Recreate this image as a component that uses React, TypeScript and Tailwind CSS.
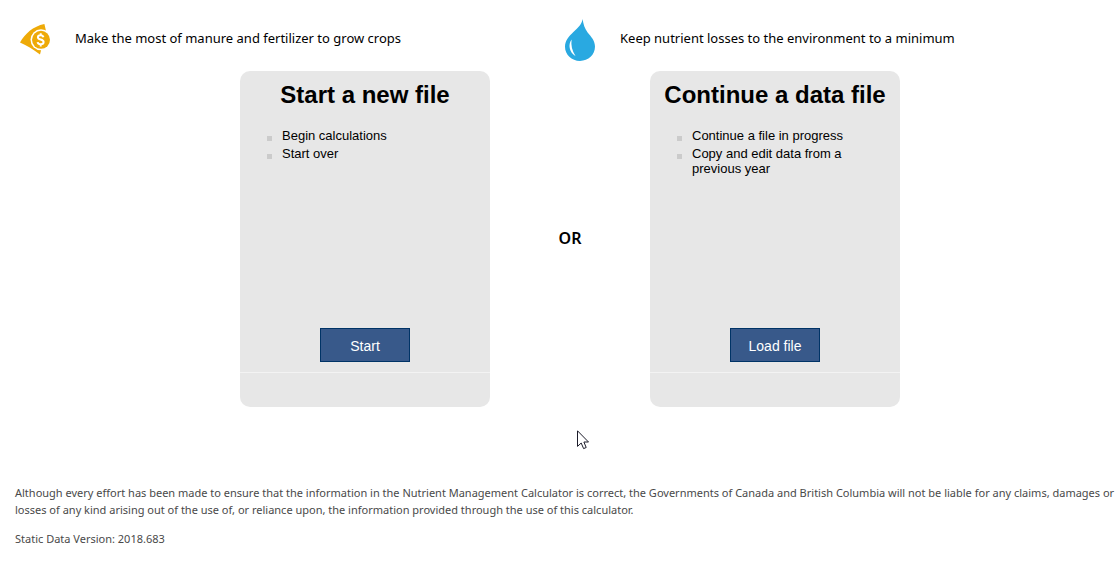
import type { ReactNode } from "react";

function CoinIcon() {
  return (
    <svg width="30" height="32" viewBox="0 0 30 32" aria-hidden="true">
      <path d="M24.4 0 L25.9 6.6 L20 30.6 C13.5 25.8 7 21.6 0 18.6 C5 9.6 13 2.4 24.4 0 Z" fill="#eeaa08" />
      <circle cx="21" cy="15.8" r="10.5" fill="#fff" />
      <circle cx="21" cy="15.8" r="9" fill="#eeaa08" />
      <path
        d="M23.4 13.2 C23 11.8 22 11.2 20.6 11.2 C19 11.2 17.9 11.9 17.9 13.2 C17.9 16.2 23.6 14.7 23.6 18 C23.6 19.5 22.4 20.3 20.7 20.3 C19 20.3 17.9 19.6 17.6 18.1 M20.7 9.2 V11.6 M20.7 20 V22.4"
        fill="none"
        stroke="#fff"
        strokeWidth="2"
      />
    </svg>
  );
}

function DropIcon() {
  return (
    <svg width="30" height="42" viewBox="0 0 30 42" aria-hidden="true">
      <path
        d="M17.6 0 C18.4 5.2 19.6 9.4 22.6 13.4 C26 17.6 30 21.4 30 27.6 C30 35.8 23.4 42 15 42 C6.6 42 0 35.8 0 27.8 C0 21.4 3.8 17.4 8.4 13 C12.8 8.8 16.8 5.4 17.6 0 Z"
        fill="#29a9e1"
      />
      <path
        d="M6.6 20.6 C2.8 25.8 4.2 33.4 10.6 37.2 C7 31.8 5.8 26.4 6.6 20.6 Z"
        fill="#fff"
      />
    </svg>
  );
}

function Pointer() {
  return (
    <svg
      className="pointer-events-none absolute -bottom-[43px] left-1/2 ml-[7px]"
      width="12"
      height="20"
      viewBox="0 0 12 20"
      aria-hidden="true"
    >
      <path
        d="M0.5 0.8 V16.4 L4.2 13 L6.6 18.6 L9.2 17.5 L6.9 12 H11.5 Z"
        fill="#fff"
        stroke="#1c1c2a"
      />
    </svg>
  );
}

function Card({
  title,
  items,
  action,
}: {
  title: string;
  items: string[];
  action: string;
}) {
  return (
    <section className="flex w-[250px] flex-col rounded-[10px] bg-[#e7e7e7] font-['Liberation_Sans',Arial,sans-serif] text-black">
      <h2 className="pt-2 text-center text-2xl font-bold">{title}</h2>
      <ul className="mt-[17px] flex min-h-50 flex-col gap-[3px] pr-10 pl-[27px] text-[13px] leading-[15px]">
        {items.map((item) => (
          <li key={item} className="flex gap-[10px]">
            <span className="mt-2 size-[5px] shrink-0 bg-[#cbcbcb]" />
            {item}
          </li>
        ))}
      </ul>
      <div className="flex justify-center border-b border-[#f3f3f3] pb-[10px]">
        <button
          type="button"
          className="h-[34px] w-[90px] border border-[#003366] bg-[#38598a] pt-px text-sm text-white"
        >
          {action}
        </button>
      </div>
      <div className="h-[34px]" />
    </section>
  );
}

function Goal({ icon, children }: { icon: ReactNode; children: ReactNode }) {
  return (
    <div className="flex flex-1 items-center">
      <div className="flex w-[55px] shrink-0">{icon}</div>
      <p className="pb-1 text-[13px] leading-5 text-black">{children}</p>
    </div>
  );
}

export default function App() {
  return (
    <main className="bg-white font-['Noto_Sans',sans-serif]">
      <div className="flex h-[71px] items-center pt-[9px] pr-[10px] pl-5">
        <Goal icon={<CoinIcon />}>Make the most of manure and fertilizer to grow crops</Goal>
        <Goal icon={<DropIcon />}>Keep nutrient losses to the environment to a minimum</Goal>
      </div>
      <div className="relative ml-5 flex items-stretch justify-center">
        <Card
          title="Start a new file"
          items={["Begin calculations", "Start over"]}
          action="Start"
        />
        <div className="flex w-40 items-center justify-center pb-[3px] text-base font-semibold text-black">
          OR
        </div>
        <Card
          title="Continue a data file"
          items={["Continue a file in progress", "Copy and edit data from a previous year"]}
          action="Load file"
        />
        <Pointer />
      </div>
      <footer className="pt-[77px] pl-[15px] text-[11px] leading-[17px] text-[#494949]">
        <p>
          Although every effort has been made to ensure that the information in the Nutrient
          Management Calculator is correct, the Governments of Canada and British Columbia will
          not be liable for any claims, damages or losses of any kind arising out of the use of,
          or reliance upon, the information provided through the use of this calculator.
        </p>
        <p className="mt-3">Static Data Version: 2018.683</p>
      </footer>
    </main>
  );
}
